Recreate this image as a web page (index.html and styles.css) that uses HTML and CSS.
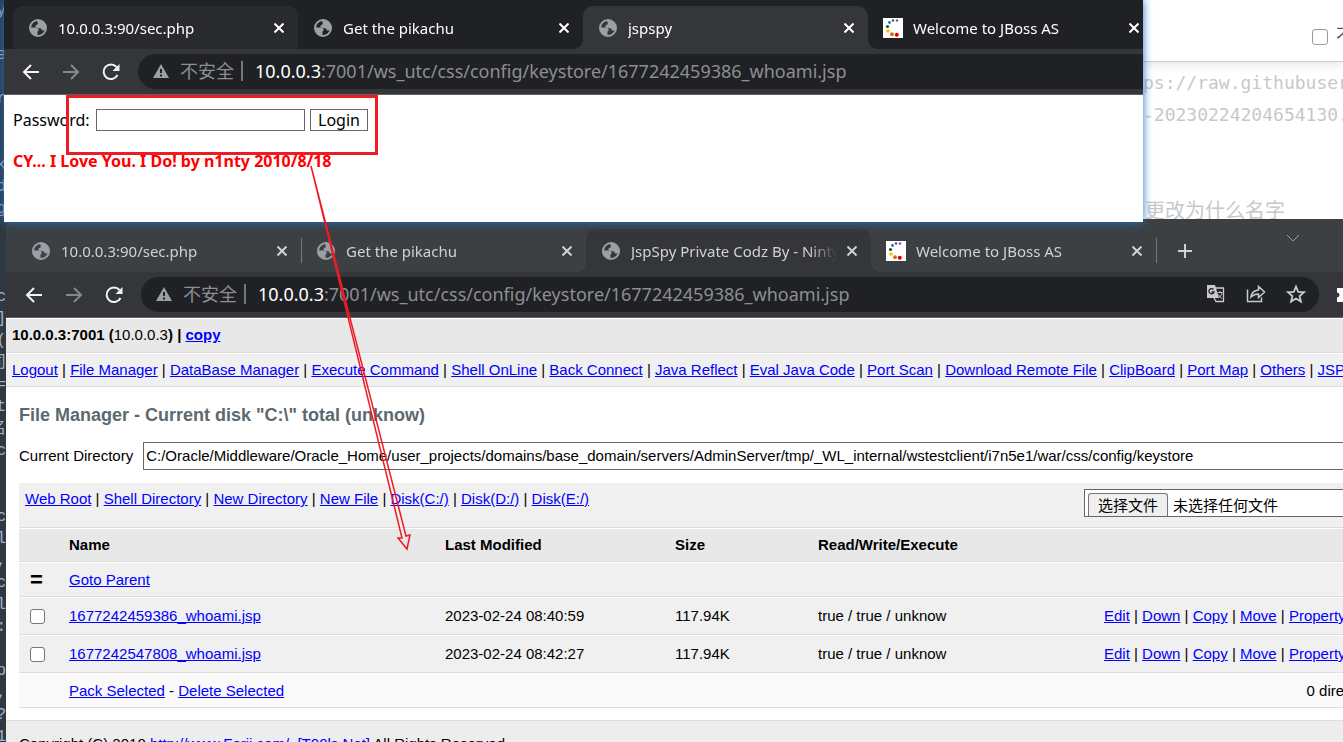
FILE: index.html
```html
<!DOCTYPE html>
<html lang="zh-CN">
<head>
<meta charset="utf-8">
<title>Desktop</title>
<link rel="stylesheet" href="styles.css">
</head>
<body>
<svg class="defs" aria-hidden="true">
  <symbol id="globe" viewBox="0 0 18 18"><circle cx="9" cy="9" r="8" fill="none" stroke="#9aa0a6" stroke-width="2"/><path fill="#9aa0a6" d="M1 8.500h4.500l3 .5 1.500 2-1.500 1.500v4.500A8 8 0 0 1 1 8.500zM8 1.500l3-.5a8 8 0 0 1 5.500 10.500l-3.500 0-1-2-3-.5-2.500-.5V6.500l2.500-1.500z"/></symbol>
  <symbol id="close" viewBox="0 0 10 10"><path d="M.5.5l9 9M9.500.5l-9 9" stroke="currentColor" stroke-width="2"/></symbol>
  <symbol id="jboss" viewBox="0 0 20 20"><path fill="#fff" d="M0 0h20v20H0z"/><circle cx="14" cy="2.500" r="1.200" fill="#8a4a9c"/><circle cx="10" cy="2.500" r="1.200" fill="#3b4f8f"/><circle cx="6.500" cy="4.500" r="1.400" fill="#3567a5"/><circle cx="4.500" cy="8.500" r="1.600" fill="#0c5c3a"/><circle cx="5" cy="13" r="1.800" fill="#f8c300"/><circle cx="9" cy="16.200" r="1.900" fill="#dd6500"/><circle cx="13.800" cy="16.800" r="2" fill="#d00"/></symbol>
  <symbol id="back" viewBox="0 0 18 16"><path d="M17 8H2M9 1L2 8l7 7" fill="none" stroke="currentColor" stroke-width="2"/></symbol>
  <symbol id="forward" viewBox="0 0 18 16"><path d="M1 8h15M9 1l7 7-7 7" fill="none" stroke="currentColor" stroke-width="2"/></symbol>
  <symbol id="reload" viewBox="0 0 18 18"><path d="M15.500 12A7.300 7.300 0 1 1 14.500 4" fill="none" stroke="currentColor" stroke-width="2"/><path d="M17.500 1v7h-7z" fill="currentColor"/></symbol>
  <symbol id="warn" viewBox="0 0 16 14"><path d="M8 0l8 14H0z" fill="#9aa0a6"/><path d="M8 5v4M8 10.500v2" stroke="#202124" stroke-width="2"/></symbol>
</svg>

<div class="desktop">
  <div class="editor" aria-hidden="true">
    <span>y</span><span></span><span>e</span><span></span><span>r</span><span></span><span></span><span>k</span><span>d</span><span>g</span><span></span><span></span><span></span><span>c</span><span>s]</span><span>e(</span><span>司</span><span>=</span><span>t</span><span>名</span><span>_c</span><span></span><span></span><span>_c</span><span>_l</span><span>,</span><span>_c</span><span>wl</span><span>x:</span><span></span><span>_p</span><span>],</span><span>?</span><span>1</span>
  </div>

  <div class="notes">
    <div class="notes-bar"><label class="note-check"><input type="checkbox">不再提示</label></div>
    <p>ps://raw.githubusercontent</p>
    <p>-20230224204654130.png</p>
    <p class="note-cn">更改为什么名字</p>
  </div>

  <section class="window files-window">
    <div class="tabs">
      <div class="tab divided"><svg class="favicon globe"><use href="#globe"/></svg><span class="title">10.0.0.3:90/sec.php</span><button class="close" aria-label="Close"><svg><use href="#close"/></svg></button></div>
      <div class="tab"><svg class="favicon globe"><use href="#globe"/></svg><span class="title">Get the pikachu</span><button class="close" aria-label="Close"><svg><use href="#close"/></svg></button></div>
      <div class="tab active"><svg class="favicon globe"><use href="#globe"/></svg><span class="title">JspSpy Private Codz By - Ninty</span><button class="close" aria-label="Close"><svg><use href="#close"/></svg></button></div>
      <div class="tab divided"><svg class="favicon"><use href="#jboss"/></svg><span class="title">Welcome to JBoss AS</span><button class="close" aria-label="Close"><svg><use href="#close"/></svg></button></div>
      <button class="new-tab" aria-label="New tab"><svg viewBox="0 0 16 16"><path d="M8 1v14M1 8h14" stroke="currentColor" stroke-width="2"/></svg></button>
      <button class="tab-search" aria-label="Search tabs"><svg viewBox="0 0 14 8"><path d="M1 1l6 6 6-6" fill="none" stroke="currentColor"/></svg></button>
    </div>
    <div class="toolbar">
      <button class="nav" aria-label="Back"><svg><use href="#back"/></svg></button>
      <button class="nav dim" aria-label="Forward"><svg><use href="#forward"/></svg></button>
      <button class="nav" aria-label="Reload"><svg><use href="#reload"/></svg></button>
      <div class="omnibox">
        <svg class="warn"><use href="#warn"/></svg><span class="unsafe">不安全</span>
        <span class="url"><b>10.0.0.3</b>:7001/ws_utc/css/config/keystore/1677242459386_whoami.jsp</span>
        <button class="action" aria-label="Translate"><svg viewBox="0 0 20 20"><path d="M9 4h8.500v13.500H10L8 14" fill="none" stroke="currentColor" stroke-width="1.300"/><path d="M1 1h8l4 13H1z" fill="currentColor"/><path d="M7.500 5.500A2.600 2.600 0 1 0 8 8H5.500" fill="none" stroke="#202124" stroke-width="1.300"/><path d="M11.500 8.500h5M14 7v1.500M16 9c-.5 2-2 4-4 5M12.500 10.500c1 2 2 3 3.500 4" fill="none" stroke="currentColor"/></svg></button>
        <button class="action" aria-label="Share"><svg viewBox="0 0 20 20"><path d="M1.500 5.500v12h14v-4" fill="none" stroke="currentColor" stroke-width="1.500"/><path d="M5 13c.5-4.500 3-6.500 7.500-7V2.500l6 5.500-6 5.500V10c-3.500 0-5.500 1-7.500 3z" fill="none" stroke="currentColor" stroke-width="1.500"/></svg></button>
        <button class="action" aria-label="Bookmark"><svg viewBox="0 0 20 20"><path d="M10 2.500l2.200 5.300 5.800.5-4.400 3.700 1.300 5.600-4.900-3-4.900 3 1.300-5.600L2 8.300l5.800-.5z" fill="none" stroke="currentColor" stroke-width="1.800"/></svg></button>
      </div>
      <svg class="puzzle" viewBox="0 0 18 18"><path d="M0 2h18v14H0v-4.500a2.500 2.500 0 0 0 0-5z" fill="#fff"/></svg>
    </div>
    <div class="page manager">
      <div class="host"><b>10.0.0.3:7001 (</b>10.0.0.3<b>) | <a href="#">copy</a></b></div>
      <nav class="menu"><a href="#">Logout</a> | <a href="#">File Manager</a> | <a href="#">DataBase Manager</a> | <a href="#">Execute Command</a> | <a href="#">Shell OnLine</a> | <a href="#">Back Connect</a> | <a href="#">Java Reflect</a> | <a href="#">Eval Java Code</a> | <a href="#">Port Scan</a> | <a href="#">Download Remote File</a> | <a href="#">ClipBoard</a> | <a href="#">Port Map</a> | <a href="#">Others</a> | <a href="#">JSP Env</a></nav>
      <main class="content">
        <h2>File Manager - Current disk "C:\" total (unknow)</h2>
        <div class="directory">
          <label for="dir">Current Directory</label>
          <input id="dir" type="text" value="C:/Oracle/Middleware/Oracle_Home/user_projects/domains/base_domain/servers/AdminServer/tmp/_WL_internal/wstestclient/i7n5e1/war/css/config/keystore">
        </div>
        <div class="shortcuts">
          <div><a href="#">Web Root</a> | <a href="#">Shell Directory</a> | <a href="#">New Directory</a> | <a href="#">New File</a> | <a href="#">Disk(C:/)</a> | <a href="#">Disk(D:/)</a> | <a href="#">Disk(E:/)</a></div>
          <div class="upload"><button>选择文件</button><span>未选择任何文件</span></div>
        </div>
        <table>
          <colgroup><col class="c-pick"><col class="c-name"><col class="c-date"><col class="c-size"><col class="c-perm"><col></colgroup>
          <tr class="head"><th></th><th>Name</th><th>Last Modified</th><th>Size</th><th>Read/Write/Execute</th><th></th></tr>
          <tr><td class="pick up">=</td><td colspan="5"><a href="#">Goto Parent</a></td></tr>
          <tr class="file"><td class="pick"><input type="checkbox" aria-label="1677242459386_whoami.jsp"></td><td><a href="#">1677242459386_whoami.jsp</a></td><td>2023-02-24 08:40:59</td><td>117.94K</td><td>true / true / unknow</td><td><a href="#">Edit</a> | <a href="#">Down</a> | <a href="#">Copy</a> | <a href="#">Move</a> | <a href="#">Property</a></td></tr>
          <tr class="file"><td class="pick"><input type="checkbox" aria-label="1677242547808_whoami.jsp"></td><td><a href="#">1677242547808_whoami.jsp</a></td><td>2023-02-24 08:42:27</td><td>117.94K</td><td>true / true / unknow</td><td><a href="#">Edit</a> | <a href="#">Down</a> | <a href="#">Copy</a> | <a href="#">Move</a> | <a href="#">Property</a></td></tr>
          <tr class="total"><td></td><td colspan="4"><a href="#">Pack Selected</a> - <a href="#">Delete Selected</a></td><td class="count">0 directories / 2 files</td></tr>
        </table>
      </main>
      <footer>Copyright (C) 2010 <a href="#">http://www.Forjj.com/</a>&nbsp; <a href="#">[T00ls.Net]</a> All Rights Reserved.</footer>
    </div>
  </section>

  <section class="window login-window">
    <div class="tabs">
      <div class="tab hover"><svg class="favicon globe"><use href="#globe"/></svg><span class="title">10.0.0.3:90/sec.php</span><button class="close" aria-label="Close"><svg><use href="#close"/></svg></button></div>
      <div class="tab"><svg class="favicon globe"><use href="#globe"/></svg><span class="title">Get the pikachu</span><button class="close" aria-label="Close"><svg><use href="#close"/></svg></button></div>
      <div class="tab active"><svg class="favicon globe"><use href="#globe"/></svg><span class="title">jspspy</span><button class="close" aria-label="Close"><svg><use href="#close"/></svg></button></div>
      <div class="tab"><svg class="favicon"><use href="#jboss"/></svg><span class="title">Welcome to JBoss AS</span><button class="close" aria-label="Close"><svg><use href="#close"/></svg></button></div>
    </div>
    <div class="toolbar">
      <button class="nav" aria-label="Back"><svg><use href="#back"/></svg></button>
      <button class="nav dim" aria-label="Forward"><svg><use href="#forward"/></svg></button>
      <button class="nav" aria-label="Reload"><svg><use href="#reload"/></svg></button>
      <div class="omnibox">
        <svg class="warn"><use href="#warn"/></svg><span class="unsafe">不安全</span>
        <span class="url"><b>10.0.0.3</b>:7001/ws_utc/css/config/keystore/1677242459386_whoami.jsp</span>
      </div>
    </div>
    <div class="page login">
      <form><label for="pw">Password:</label><input id="pw" type="password"><button type="button">Login</button></form>
      <p>CY... I Love You. I Do! by n1nty 2010/8/18</p>
    </div>
  </section>

  <div class="highlight"></div>
  <svg class="arrow" viewBox="0 0 104 390"><path d="M4 1L95 373h-4l9 11 3-14-4 1z" fill="none" stroke="#ed1c24" stroke-width="1.500"/></svg>
</div>
</body>
</html>
```

FILE: styles.css
```css
* { box-sizing: border-box; }
body { margin: 0; }
button { border: 0; padding: 0; background: none; color: inherit; font: inherit; }
svg { display: block; }
.defs { position: absolute; width: 0; height: 0; }

.desktop {
  position: relative;
  height: 100vh;
  overflow: hidden;
  background: #fff;
  font: 15px/20px "Liberation Sans", Arial, "Noto Sans CJK SC", sans-serif;
  color: #000;
}

.editor {
  width: 6px;
  height: 100%;
  overflow: hidden;
  background: #303841;
  color: #9fb4cc;
  font: 16px/22px "Liberation Mono", "Noto Sans CJK SC", monospace;
}
.editor span { display: flex; justify-content: flex-end; height: 22px; }

.notes {
  position: absolute;
  top: 0;
  right: 0;
  width: 200px;
  height: 219px;
  overflow: hidden;
  color: #c8c8c8;
  font: 18px/32px "DejaVu Sans Mono", monospace;
  white-space: nowrap;
}
.notes p { margin: 0; }
.notes-bar {
  height: 62px;
  margin-bottom: 5px;
  padding: 20px 0 0 169px;
  border-bottom: 1px solid #ccc;
  box-shadow: 0 2px 10px #e4e4e4;
}
.note-check { display: flex; gap: 8px; color: #555; font-size: 18px; }
.note-check input { flex: none; }
.notes .note-cn { margin-top: 62px; padding-left: 2px; font: 20px/34px "Noto Sans CJK SC", sans-serif; }

input[type="checkbox"] {
  appearance: none;
  width: 15px;
  height: 15px;
  margin: 0;
  border: 1px solid #767676;
  border-radius: 3px;
  background: #fff;
}
.note-check input[type="checkbox"] { width: 16px; height: 16px; margin-top: 9px; border-color: #999; }

/* browser windows */
.window { position: absolute; overflow: hidden; background: #fff; }
.login-window {
  --inset: 9px;
  --strip: #202124;
  top: 0;
  left: 4px;
  right: 200px;
  height: 222px;
  box-shadow: 0 0 9px #2472c8;
}
.files-window {
  --inset: 10px;
  --strip: #3c4043;
  top: 219px;
  left: 6px;
  right: 0;
  bottom: 0;
}

.tabs {
  display: flex;
  align-items: flex-end;
  height: 49px;
  padding-left: var(--inset);
  background: var(--strip);
  color: #fff;
  font: 15px/20px "Noto Sans", "Noto Sans CJK SC", sans-serif;
}
.files-window .tabs { height: 53px; color: #d0d1d3; }
.tab {
  position: relative;
  display: flex;
  align-items: center;
  flex: none;
  gap: 10px;
  width: 285px;
  height: 43px;
  padding: 0 14px 0 15px;
  border-radius: 10px 10px 0 0;
}
.tab.hover { background: #292a2d; }
.tab.active { background: #35363a; }
.tab.active::before,
.tab.active::after {
  content: "";
  position: absolute;
  bottom: 0;
  width: 10px;
  height: 10px;
}
.tab.active::before { right: 100%; background: radial-gradient(circle at 0 0, transparent 10px, #35363a 10px); }
.tab.active::after { left: 100%; background: radial-gradient(circle at 100% 0, transparent 10px, #35363a 10px); }
.tab.divided::after {
  content: "";
  position: absolute;
  right: -1px;
  top: 9px;
  width: 1px;
  height: 25px;
  background: #75787b;
}
.favicon { flex: none; width: 20px; height: 20px; }
.favicon.globe { padding: 1px; }
.title {
  flex: 1;
  overflow: hidden;
  white-space: nowrap;
  mask-image: linear-gradient(to right, #000 calc(100% - 28px), transparent);
}
.close svg { width: 10px; height: 10px; }
.new-tab { height: 43px; margin-left: 21px; }
.new-tab svg { width: 16px; height: 16px; }
.tab-search { margin: 0 43px 30px auto; color: #9a9c9e; }
.tab-search svg { width: 14px; height: 8px; }

.toolbar {
  display: flex;
  align-items: center;
  gap: 22px;
  height: 46px;
  padding-left: calc(var(--inset) + 9px);
  border-bottom: 1px solid #5f6063;
  background: #35363a;
  color: #f1f3f4;
}
.nav svg { width: 18px; height: 18px; }
.dim { color: #85878a; }
.omnibox {
  display: flex;
  align-items: center;
  flex: 1;
  min-width: 0;
  height: 35px;
  margin-left: -4px;
  padding: 0 0 1px 15px;
  border-radius: 18px 0 0 18px;
  background: #202124;
  color: #8d8f92;
  font: 18px/24px "Noto Sans", "Noto Sans CJK SC", sans-serif;
  white-space: nowrap;
}
.files-window .omnibox { padding-right: 13px; border-radius: 18px; }
.warn { flex: none; width: 16px; height: 14px; margin-right: 11px; }
.unsafe { height: 20px; line-height: 20px; padding-right: 7px; border-right: 2px solid #75787b; }
.url { flex: 1; padding-left: 12px; }
.url b { font-weight: 400; color: #fff; }
.action { margin-left: 20px; color: #c8cacc; }
.action svg { width: 20px; height: 20px; }
.puzzle { flex: none; width: 18px; height: 18px; margin: 0 -12px 0 -4px; }

/* login page */
.login { padding: 14px 9px; font: 16px/22px "Noto Sans", sans-serif; }
.login form { display: flex; gap: 5px; }
.login label { width: 78px; white-space: nowrap; }
.login input { width: 209px; height: 22px; padding: 0 2px; border: 1px solid #666; background: #fff; }
.login button { width: 58px; height: 22px; border: 1px solid #666; line-height: 20px; background: #fff; }
.login p { margin: 19px 0 0; color: #f00; font-weight: 700; }

/* file manager page */
.manager { width: calc(100% + 123px); padding-top: 1px; white-space: nowrap; }
.manager a { color: #00f; }
.host, .menu { padding: 6px; border-bottom: 1px solid #ddd; }
.host { height: 34px; background: #e8e8e8; }
.menu { height: 33px; margin-top: 1px; background: #f0f0f0; }
.content { padding: 18px 13px 12px; }
.content h2 { margin: 0 0 17px; color: #5b686f; font-size: 18px; line-height: 20px; }
.directory { display: flex; align-items: center; gap: 10px; margin-bottom: 13px; }
.directory input {
  flex: 1;
  height: 28px;
  padding: 0 2px 2px;
  border: 1px solid #666;
  font: inherit;
}
.shortcuts {
  display: flex;
  justify-content: space-between;
  height: 45px;
  padding: 6px;
  border-bottom: 1px solid #ddd;
  background: #f0f0f0;
}
.upload {
  display: flex;
  align-items: flex-end;
  gap: 5px;
  width: 363px;
  height: 28px;
  padding-left: 3px;
  border: 1px solid #666;
  background: #fff;
}
.upload button {
  height: 23px;
  padding: 2px 9px 0;
  border: 1px solid #767676;
  border-bottom: 0;
  border-radius: 3px 3px 0 0;
  background: #efefef;
  line-height: 20px;
}
table { width: 100%; table-layout: fixed; border-collapse: separate; border-spacing: 0; }
.c-pick { width: 44px; }
.c-name { width: 376px; }
.c-date { width: 230px; }
.c-size { width: 143px; }
.c-perm { width: 286px; }
th, td { height: 35px; padding: 0 6px; border-top: 1px solid #fff; border-bottom: 1px solid #ddd; text-align: left; }
tr { background: #f0f0f0; }
.head { background: #e8e8e8; }
.head th { height: 34px; }
.file td { height: 38px; }
.total { background: #f9f9f9; }
.pick { padding-left: 11px; }
.pick input { display: block; }
.up { font-size: 22px; font-weight: 700; }
td.count { padding-right: 13px; text-align: right; }
footer { padding: 13px; border-top: 1px solid #ddd; background: #ededed; }

/* annotations drawn over both windows */
.highlight { position: absolute; top: 95px; left: 66px; width: 312px; height: 60px; border: 3px solid #ed1c24; }
.arrow { position: absolute; top: 165px; left: 307px; width: 104px; height: 390px; }
```
